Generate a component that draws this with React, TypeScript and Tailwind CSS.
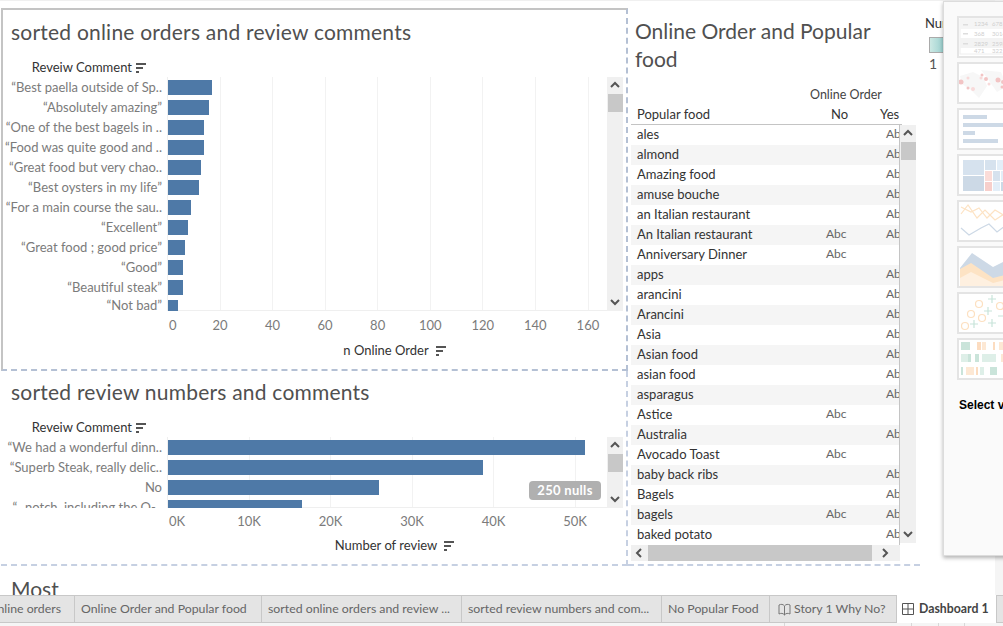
import React from "react";

const font = { fontFamily: "Lato, 'Open Sans', sans-serif" };

const SortIcon = () => (
  <svg width="11" height="10" viewBox="0 0 11 10" className="shrink-0">
    <rect x="0" y="0" width="10" height="2" fill="#555" />
    <rect x="0" y="4" width="7" height="2" fill="#555" />
    <rect x="0" y="8" width="3" height="2" fill="#555" />
  </svg>
);

const Chevron = ({ dir }: { dir: "up" | "down" | "left" | "right" }) => {
  const d = {
    up: "M1 6 L5 2 L9 6",
    down: "M1 2 L5 6 L9 2",
    left: "M6 1 L2 5 L6 9",
    right: "M2 1 L6 5 L2 9",
  }[dir];
  return (
    <svg width="10" height="10" viewBox="0 0 10 10" className="shrink-0">
      <path d={d} fill="none" stroke="#555" strokeWidth="2" />
    </svg>
  );
};

const VScroll = ({ height }: { height: string }) => (
  <div className={`w-4 shrink-0 bg-[#f0f0f0] flex flex-col items-center ${height}`}>
    <div className="h-[17px] flex items-center justify-center">
      <Chevron dir="up" />
    </div>
    <div className="w-[15px] h-[18px] bg-[#c8c8c8]" />
    <div className="flex-1" />
    <div className="h-[17px] flex items-center justify-center">
      <Chevron dir="down" />
    </div>
  </div>
);

const onlineRows: [string, number][] = [
  ["“Best paella outside of Sp..", 44],
  ["“Absolutely amazing”", 41],
  ["“One of the best bagels in ..", 36],
  ["“Food was quite good and ..", 36],
  ["“Great food but very chao..", 33],
  ["“Best oysters in my life”", 31],
  ["“For a main course the sau..", 23],
  ["“Excellent”", 20],
  ["“Great food ; good price”", 17],
  ["“Good”", 15],
  ["“Beautiful steak”", 15],
  ["“Not bad”", 10],
];

const reviewRows: [string, number][] = [
  ["“We had a wonderful dinn..", 417],
  ["“Superb Steak, really delic..", 315],
  ["No", 211],
  ["“...notch, including the O-..", 134],
];

const onlineTicks = [52, 104, 157, 209, 262, 314, 367, 420];
const onlineLabels = ["0", "20", "40", "60", "80", "100", "120", "140", "160"];
const reviewTicks = [81, 162, 244, 325, 407];
const reviewLabels = ["0K", "10K", "20K", "30K", "40K", "50K"];

const Bars = ({ rows, ticks, height }: { rows: [string, number][]; ticks: number[]; height: string }) => (
  <div className={`flex overflow-hidden ${height}`}>
    <div className="w-[164px] shrink-0 flex flex-col">
      {rows.map(([label]) => (
        <div
          key={label}
          className={`h-5 shrink-0 flex items-center justify-end pr-[5px] pt-px text-[13px] text-[#7b7b7b] whitespace-nowrap ${
            label === "“Not bad”" ? "-translate-y-0.5" : ""
          }`}
        >
          {label}
        </div>
      ))}
    </div>
    <div className="relative flex-1 border-l border-b border-[#efefef] flex flex-col">
      {ticks.map((t) => (
        <div key={t} className="absolute top-0 bottom-0 w-px bg-[#f2f2f2]" style={{ left: t }} />
      ))}
      {rows.map(([label, w]) => (
        <div key={label} className="relative h-5 shrink-0 flex items-center">
          <div className="h-[15px] bg-[#4e79a7]" style={{ width: w }} />
        </div>
      ))}
    </div>
  </div>
);

const Panel = ({
  title,
  rows,
  ticks,
  labels,
  axisTitle,
  chartHeight,
  firstLabel,
  labelWidth,
  tickGap,
  titleGap,
  className,
  children,
}: {
  title: string;
  rows: [string, number][];
  ticks: number[];
  labels: string[];
  axisTitle: string;
  chartHeight: string;
  firstLabel: string;
  labelWidth: string;
  tickGap: string;
  titleGap: string;
  className: string;
  children?: React.ReactNode;
}) => (
  <section className={`relative ${className}`}>
    <h2 className="text-[21px] leading-7 tracking-[0.22px] text-[#505050] pl-2 font-normal whitespace-nowrap">{title}</h2>
    <div className="flex items-center justify-end w-[144px] gap-1 h-4 mt-[14px] text-[13px] text-[#333]">
      <span className="whitespace-nowrap">Reveiw Comment</span>
      <SortIcon />
    </div>
    <div className="flex mt-px">
      <div className="w-[604px] shrink-0">
        <Bars rows={rows} ticks={ticks} height={chartHeight} />
        <div className={`flex text-[13px] text-[#7b7b7b] h-5 items-center pl-[165px] ${tickGap}`}>
          {labels.map((l, i) => (
            <span key={l} className={i === 0 ? `${firstLabel} pl-px shrink-0` : `${labelWidth} text-center shrink-0`}>
              {l}
            </span>
          ))}
        </div>
      </div>
      <VScroll height={chartHeight} />
    </div>
    <div className={`flex items-center justify-center w-[604px] pl-[180px] gap-[7px] text-[13px] text-[#333] ${titleGap}`}>
      <span className="whitespace-nowrap">{axisTitle}</span>
      <SortIcon />
    </div>
    {children}
  </section>
);

const foodRows: [string, boolean, boolean][] = [
  ["ales", false, true],
  ["almond", false, true],
  ["Amazing food", false, true],
  ["amuse bouche", false, true],
  ["an Italian restaurant", false, true],
  ["An Italian restaurant", true, true],
  ["Anniversary Dinner", true, false],
  ["apps", false, true],
  ["arancini", false, true],
  ["Arancini", false, true],
  ["Asia", false, true],
  ["Asian food", false, true],
  ["asian food", false, true],
  ["asparagus", false, true],
  ["Astice", true, false],
  ["Australia", false, true],
  ["Avocado Toast", true, false],
  ["baby back ribs", false, true],
  ["Bagels", false, true],
  ["bagels", true, true],
  ["baked potato", false, true],
];

const FoodTable = () => (
  <div className="w-[292px] h-[558px] shrink-0 border-b-2 border-dashed border-[#c6d0e2] overflow-hidden">
    <h2 className="text-[21px] leading-7 text-[#505050] pl-[7px] pt-[9px] font-normal w-[270px]">
      Online Order and Popular food
    </h2>
    <div className="w-[271px] ml-[3px]">
      <div className="text-[12.5px] text-[#444] h-5 mt-[12px] flex items-center pl-[179px] whitespace-nowrap">
        Online Order
      </div>
      <div className="h-5 flex items-center text-[13px] text-[#333] border-b border-[#c4c4c4]">
        <span className="w-[200px] pl-[6px] shrink-0">Popular food</span>
        <span className="w-[49px] shrink-0">No</span>
        <span className="whitespace-nowrap">Yes</span>
      </div>
    </div>
    <div className="flex ml-[3px]">
      <div className="w-[269px] h-[420px] border-r border-[#c4c4c4] overflow-hidden shrink-0">
        {foodRows.map(([name, no, yes], i) => (
          <div
            key={name + i}
            className={`h-5 flex items-center text-[13px] text-[#333] ${i % 2 === 1 ? "bg-[#f5f5f5]" : "bg-white"}`}
          >
            <span className="w-[195px] pl-[6px] whitespace-nowrap shrink-0">{name}</span>
            <span className="w-[60px] text-xs text-[#666] shrink-0 -translate-y-px">{no ? "Abc" : ""}</span>
            <span className="text-xs text-[#666] whitespace-nowrap shrink-0 -translate-y-px">{yes ? "Abc" : ""}</span>
          </div>
        ))}
      </div>
      <VScroll height="h-[418px]" />
    </div>
    <div className="ml-[3px] w-[269px] h-4 bg-[#f0f0f0] flex items-center">
      <div className="w-[17px] flex justify-center">
        <Chevron dir="left" />
      </div>
      <div className="w-[224px] h-4 bg-[#c8c8c8]" />
      <div className="flex-1 flex justify-center">
        <Chevron dir="right" />
      </div>
    </div>
  </div>
);

const Thumb = ({ children }: { children: React.ReactNode }) => (
  <div className="w-[125px] h-[42px] shrink-0 bg-white border-2 border-[#e4e4e4] overflow-hidden">
    <svg width="121" height="38" viewBox="0 0 121 38">
      {children}
    </svg>
  </div>
);

const numCells: [number, string, string][] = [
  [8, "1234", "678"],
  [18, "368", "3014"],
  [28, "2829", "2598"],
  [35, "471", "322"],
];

const Gallery = () => (
  <aside className="absolute left-[943px] top-px w-[200px] h-[555px] bg-[#fafafa] border border-[#dcdcdc] shadow-[0_2px_4px_rgba(0,0,0,0.3)] pl-[13px] pt-[14px] flex flex-col gap-1">
    <Thumb>
      <rect x="1" y="1" width="118" height="35" fill="#fff" stroke="#eee" />
      <rect x="1" y="1" width="118" height="10" fill="#f5f5f5" />
      <rect x="1" y="20" width="118" height="10" fill="#f3f3f3" />
      <rect x="4" y="6" width="5" height="1.5" fill="#ddd" />
      <rect x="4" y="15" width="5" height="1.5" fill="#ddd" />
      <rect x="4" y="25" width="5" height="1.5" fill="#ddd" />
      {numCells.map(([y, a, b]) => (
        <g key={a} fontSize="6" fill="#cfcfcf">
          <text x="15" y={y}>{a}</text>
          <text x="33" y={y}>{b}</text>
        </g>
      ))}
    </Thumb>
    <Thumb>
      <path d="M1 12 L14 8 L24 13 L28 22 L20 34 L12 26 L3 20 Z" fill="#f7f7f7" />
      <path d="M22 6 L42 8 L48 22 L38 28 L28 14 Z" fill="#f7f7f7" />
      <circle cx="2" cy="18" r="2.5" fill="#f2c4c4" />
      <circle cx="9" cy="14" r="1.5" fill="#f8dada" />
      <circle cx="9" cy="24" r="1.5" fill="#f2c4c4" />
      <circle cx="14" cy="25" r="2" fill="#f8dada" />
      <circle cx="23" cy="11" r="1.5" fill="#f2c4c4" />
      <circle cx="22" cy="14" r="1.5" fill="#f8dada" />
      <circle cx="27" cy="15" r="2" fill="#f2c4c4" />
      <circle cx="30" cy="20" r="1.5" fill="#f8dada" />
      <circle cx="39" cy="16" r="2.5" fill="#f2c4c4" />
      <circle cx="43" cy="23" r="1.5" fill="#f2c4c4" />
      <circle cx="44" cy="18" r="2" fill="#f2c4c4" />
    </Thumb>
    <Thumb>
      <rect x="4" y="5" width="24" height="4" fill="#cdd9e6" />
      <rect x="4" y="13" width="100" height="4" fill="#cdd9e6" />
      <rect x="4" y="21" width="12" height="4" fill="#cdd9e6" />
      <rect x="4" y="29" width="35" height="4" fill="#cdd9e6" />
    </Thumb>
    <Thumb>
      <rect x="4" y="4" width="21" height="15" fill="#d6e2ee" />
      <rect x="4" y="20" width="21" height="15" fill="#ccd9e6" />
      <rect x="26" y="4" width="11" height="10" fill="#d6e2ee" />
      <rect x="38" y="4" width="8" height="10" fill="#e3eef8" />
      <rect x="26" y="15" width="7" height="10" fill="#fbdcd8" />
      <rect x="34" y="15" width="7" height="10" fill="#d6e2ee" />
      <rect x="42" y="15" width="4" height="10" fill="#e3eef8" />
      <rect x="26" y="26" width="7" height="9" fill="#f7cfcb" />
      <rect x="34" y="26" width="7" height="9" fill="#e3eef8" />
      <rect x="42" y="26" width="4" height="9" fill="#ccd9e6" />
    </Thumb>
    <Thumb>
      <path d="M2 12 L9 3 L18 16 L26 8 L36 18 L45 12" fill="none" stroke="#fde3c4" strokeWidth="1.2" />
      <path d="M2 5 L12 10 L20 6 L28 16 L36 8 L46 14" fill="none" stroke="#fde3c4" strokeWidth="1.2" />
      <path d="M2 26 L10 33 L22 26 L30 22 L38 30 L46 24" fill="none" stroke="#cdd9e6" strokeWidth="1.2" />
    </Thumb>
    <Thumb>
      <path d="M1 20 L13 5 L34 19 L46 13 V38 H1 Z" fill="#cdd9e6" />
      <path d="M1 21 L12 15 L34 30 L46 27 V38 H1 Z" fill="#fde3c4" />
      <path d="M1 30 L12 24 L34 35 L46 32 V38 H1 Z" fill="#fef0e0" />
    </Thumb>
    <Thumb>
      <g fill="none" stroke="#fde0c0" strokeWidth="1.2">
        <circle cx="6" cy="32" r="3.5" />
        <circle cx="12" cy="20" r="3.5" />
        <circle cx="23" cy="24" r="3.5" />
        <circle cx="20" cy="10" r="3.5" />
        <circle cx="41" cy="12" r="3.5" />
      </g>
      <path d="M33 1 V9 M29 5 H37 M29 13 V21 M25 17 H33 M33 25 V33 M29 29 H37 M15 26 V34 M11 30 H19 M39 22 H47" stroke="#c8e4da" strokeWidth="1.2" />
    </Thumb>
    <Thumb>
      <rect x="2" y="2" width="9" height="8" fill="#cae4da" />
      <rect x="18" y="2" width="4" height="8" fill="#fcdcc0" />
      <rect x="23" y="2" width="4" height="8" fill="#fde8d4" />
      <rect x="34" y="2" width="2" height="8" fill="#fcdcc0" />
      <rect x="40" y="2" width="6" height="8" fill="#fde8d4" />
      <rect x="2" y="14" width="7" height="8" fill="#deefe8" />
      <rect x="9" y="14" width="3" height="8" fill="#cae4da" />
      <rect x="16" y="14" width="4" height="8" fill="#cae4da" />
      <rect x="23" y="14" width="14" height="8" fill="#deefe8" />
      <rect x="42" y="14" width="4" height="8" fill="#fde8d4" />
      <rect x="2" y="27" width="2" height="8" fill="#cae4da" />
      <rect x="7" y="27" width="8" height="8" fill="#fde8d4" />
      <rect x="17" y="27" width="2" height="8" fill="#fcdcc0" />
      <rect x="21" y="27" width="4" height="8" fill="#deefe8" />
      <rect x="31" y="27" width="7" height="8" fill="#cae4da" />
    </Thumb>
    <p className="mt-[13px] pl-[2px] text-xs font-bold text-black whitespace-nowrap" style={{ fontFamily: "'Liberation Sans', sans-serif" }}>
      Select views and objects
    </p>
  </aside>
);

const Legend = () => (
  <div className="pl-[5px] pt-[6px] w-[23px]">
    <div className="text-[13px] text-[#333] whitespace-nowrap">Number of</div>
    <div className="w-[30px] h-4 mt-[3px] ml-1 border border-[#aaa] bg-gradient-to-r from-[#cde9e4] to-[#5fb5b8]" />
    <div className="ml-1 mt-px text-sm text-[#555]">1</div>
  </div>
);

const tabs = [
  { label: "Online Order and Popular food", w: "w-[187px]" },
  { label: "sorted online orders and review ...", w: "w-[200px]" },
  { label: "sorted review numbers and com...", w: "w-[200px]" },
  { label: "No Popular Food", w: "w-[108px]" },
];

const TabBar = () => (
  <div className="h-[28px] shrink-0 flex bg-[#e4e4e4] border-t border-b border-[#c8c8c8] text-[12.3px] text-[#666]">
    <div className="w-[75px] shrink-0 border-r border-[#c8c8c8] overflow-hidden flex items-center justify-end pr-[13px] whitespace-nowrap">
      nline orders
    </div>
    {tabs.map((t) => (
      <div key={t.label} className={`${t.w} shrink-0 border-r border-[#c8c8c8] flex items-center pl-[6px] whitespace-nowrap`}>
        {t.label}
      </div>
    ))}
    <div className="w-[126px] shrink-0 flex items-center pl-2 gap-[3px] whitespace-nowrap">
      <svg width="13" height="13" viewBox="0 0 13 13" fill="none" stroke="#777">
        <path d="M1 2 C3 1 5 1 6.5 3 C8 1 10 1 12 2 V11 C10 10 8 10 6.5 12 C5 10 3 10 1 11 Z M6.5 3 V12" />
      </svg>
      Story 1 Why No?
    </div>
    <div className="w-[101px] shrink-0 -my-px bg-white border-l border-r border-[#c8c8c8] flex items-center pl-[5px] gap-[5px] font-bold text-[12.3px] text-[#444] whitespace-nowrap">
      <svg width="12" height="12" viewBox="0 0 12 12" fill="none" stroke="#555">
        <path d="M0.5 0.5 H11.5 V11.5 H0.5 Z M6 0.5 V11.5 M0.5 6 H11.5" />
      </svg>
      Dashboard 1
    </div>
  </div>
);

export default function App() {
  return (
    <div className="relative w-[1003px] h-[626px] overflow-hidden bg-white flex flex-col" style={font}>
      <div className="h-[595px] shrink-0 border-t border-[#f0f0f0] pt-[7px] flex overflow-hidden">
        <div className="w-[628px] shrink-0 flex flex-col">
          <Panel
            title="sorted online orders and review comments"
            rows={onlineRows}
            ticks={onlineTicks}
            labels={onlineLabels}
            axisTitle="n Online Order"
            chartHeight="h-[234px]"
            firstLabel="w-[25.7px]"
            labelWidth="w-[52.57px]"
            tickGap="mt-[5px]"
            titleGap="mt-[5px]"
            className="ml-px h-[363px] border-2 border-t-[#c4c4c4] border-l-[#c4c4c4] border-r-[#b4c0d4] border-b-[#b4c0d4] [border-right-style:dashed] [border-bottom-style:dashed] pt-2"
          />
          <Panel
            title="sorted review numbers and comments"
            rows={reviewRows}
            ticks={reviewTicks}
            labels={reviewLabels}
            axisTitle="Number of review"
            chartHeight="h-[71px]"
            firstLabel="w-[40.25px]"
            labelWidth="w-[81.5px]"
            tickGap="mt-1"
            titleGap="mt-1"
            className="ml-px h-[195px] border-r-2 border-b-2 border-dashed border-[#c6d0e2] pt-[7px] pl-[2px]"
          >
            <div className="absolute right-[25px] bottom-[64px] w-[72px] h-[19px] rounded bg-[#b0b0b0] text-white text-[13px] tracking-[0.3px] font-bold flex items-center justify-center">
              250 nulls
            </div>
          </Panel>
          <div className="h-[29px] overflow-hidden pl-[11px] pt-[9px] text-[21px] leading-7 text-[#505050]">Most</div>
        </div>
        <FoodTable />
        <Legend />
      </div>
      <TabBar />
      <div className="flex-1 bg-[#f5f5f5] flex pl-[784px]">
        <div className="w-[127px] border-l border-[#d8d8d8]" />
        <div className="w-[27px] border-l border-[#d8d8d8]" />
        <div className="w-[27px] border-l border-r border-[#d8d8d8]" />
      </div>
      <div className="absolute right-0 top-0 w-2 h-[595px] bg-[#f5f5f5]" />
      <Gallery />
    </div>
  );
}
